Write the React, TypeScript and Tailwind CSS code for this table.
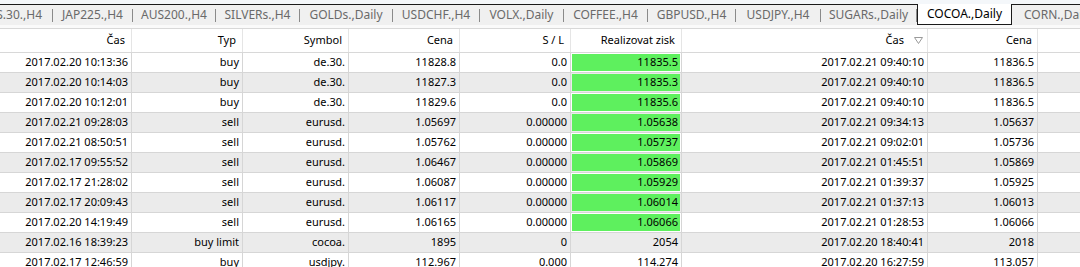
import React from 'react';

type Tab = { label: string; width: string };

const tabs: Tab[] = [
  { label: 'US.30.,H4', width: 'w-[52px]' },
  { label: 'JAP225.,H4', width: 'w-[79px]' },
  { label: 'AUS200.,H4', width: 'w-[82px]' },
  { label: 'SILVERs.,H4', width: 'w-[83px]' },
  { label: 'GOLDs.,Daily', width: 'w-[92px]' },
  { label: 'USDCHF.,H4', width: 'w-[86px]' },
  { label: 'VOLX.,Daily', width: 'w-[83px]' },
  { label: 'COFFEE.,H4', width: 'w-[83px]' },
  { label: 'GBPUSD.,H4', width: 'w-[87px]' },
  { label: 'USDJPY.,H4', width: 'w-[84px]' },
  { label: 'SUGARs.,Daily', width: 'w-[95px]' },
];

// column widths incl. the 1px right border
const cols = ['w-[132px]', 'w-[111px]', 'w-[106px]', 'w-[111px]', 'w-[111px]', 'w-[111px]', 'w-[246px]', 'w-[110px]'];

type Order = {
  time: string;
  type: string;
  symbol: string;
  price: string;
  sl: string;
  tp: string;
  closeTime: string;
  closePrice: string;
  hit: boolean;
};

const orders: Order[] = [
  { time: '2017.02.20 10:13:36', type: 'buy', symbol: 'de.30.', price: '11828.8', sl: '0.0', tp: '11835.5', closeTime: '2017.02.21 09:40:10', closePrice: '11836.5', hit: true },
  { time: '2017.02.20 10:14:03', type: 'buy', symbol: 'de.30.', price: '11827.3', sl: '0.0', tp: '11835.3', closeTime: '2017.02.21 09:40:10', closePrice: '11836.5', hit: true },
  { time: '2017.02.20 10:12:01', type: 'buy', symbol: 'de.30.', price: '11829.6', sl: '0.0', tp: '11835.6', closeTime: '2017.02.21 09:40:10', closePrice: '11836.5', hit: true },
  { time: '2017.02.21 09:28:03', type: 'sell', symbol: 'eurusd.', price: '1.05697', sl: '0.00000', tp: '1.05638', closeTime: '2017.02.21 09:34:13', closePrice: '1.05637', hit: true },
  { time: '2017.02.21 08:50:51', type: 'sell', symbol: 'eurusd.', price: '1.05762', sl: '0.00000', tp: '1.05737', closeTime: '2017.02.21 09:02:01', closePrice: '1.05736', hit: true },
  { time: '2017.02.17 09:55:52', type: 'sell', symbol: 'eurusd.', price: '1.06467', sl: '0.00000', tp: '1.05869', closeTime: '2017.02.21 01:45:51', closePrice: '1.05869', hit: true },
  { time: '2017.02.17 21:28:02', type: 'sell', symbol: 'eurusd.', price: '1.06087', sl: '0.00000', tp: '1.05929', closeTime: '2017.02.21 01:39:37', closePrice: '1.05925', hit: true },
  { time: '2017.02.17 20:09:43', type: 'sell', symbol: 'eurusd.', price: '1.06117', sl: '0.00000', tp: '1.06014', closeTime: '2017.02.21 01:37:13', closePrice: '1.06013', hit: true },
  { time: '2017.02.20 14:19:49', type: 'sell', symbol: 'eurusd.', price: '1.06165', sl: '0.00000', tp: '1.06066', closeTime: '2017.02.21 01:28:53', closePrice: '1.06066', hit: true },
  { time: '2017.02.16 18:39:23', type: 'buy limit', symbol: 'cocoa.', price: '1895', sl: '0', tp: '2054', closeTime: '2017.02.20 18:40:41', closePrice: '2018', hit: false },
  { time: '2017.02.17 12:46:59', type: 'buy', symbol: 'usdjpy.', price: '112.967', sl: '0.000', tp: '114.274', closeTime: '2017.02.20 16:27:59', closePrice: '113.057', hit: false },
];

const SortIcon = () => (
  <svg width="9" height="7" viewBox="0 0 9 7" className="ml-[10px] mr-[4px]">
    <path d="M0.5 0.5 H8.5 L4.5 6.5 Z" fill="none" stroke="#9a9a9a" strokeWidth="1" />
  </svg>
);

const App: React.FC = () => {
  const headers = ['Čas', 'Typ', 'Symbol', 'Cena', 'S / L', 'Realizovat zisk'];

  return (
    <div className="w-[1080px] h-[267px] overflow-hidden bg-white text-black" style={{ fontFamily: '"Noto Sans", "Open Sans", sans-serif' }}>
      {/* Tab strip */}
      <div className="h-[4px] bg-[#f4f7fa]" />
      <div className="flex h-[21px] bg-[#f0f0f0] border-t border-[#1a1a1a] text-[12px] whitespace-nowrap">
        {tabs.map((t, i) => (
          <React.Fragment key={t.label}>
            <div className={`${t.width} shrink-0 flex items-center overflow-hidden text-[#6a6a6a] ${i === 0 ? 'justify-end pr-[10px]' : 'justify-center'}`}>
              {t.label}
            </div>
            <div className="w-px shrink-0 self-center h-[13px] bg-[#8a8a8a]" />
          </React.Fragment>
        ))}
        <div className="w-[95px] shrink-0 -mt-px h-[21px] flex items-center justify-center bg-white border-x border-b border-[#1a1a1a]">
          COCOA.,Daily
        </div>
        <div className="shrink-0 flex items-center pl-[12px] text-[#6a6a6a]">CORN.,Daily</div>
      </div>
      <div className="h-[3px] bg-[#fafafa]" />

      {/* Table */}
      <div className="text-[11px]">
        <div className="flex h-[25px] border-y border-[#d8d8d8] bg-white">
          {headers.map((h, i) => (
            <div key={i} className={`${cols[i]} shrink-0 flex items-center justify-end pr-[6px] border-r border-[#e5e5e5]`}>
              {h}
            </div>
          ))}
          <div className={`${cols[6]} shrink-0 flex items-center justify-end border-r border-[#e5e5e5]`}>
            Čas
            <SortIcon />
          </div>
          <div className={`${cols[7]} shrink-0 flex items-center justify-end pr-[5px] border-r border-[#e5e5e5]`}>Cena</div>
          <div className="flex-1" />
        </div>

        {orders.map((o, r) => {
          const cells = [o.time, o.type, o.symbol, o.price, o.sl];
          return (
            <div key={r} className={`flex h-[20px] border-b border-[#d6d6d6] ${r % 2 === 1 ? 'bg-[#ebebeb]' : 'bg-white'}`}>
              {cells.map((c, i) => (
                <div key={i} className={`${cols[i]} shrink-0 flex items-center justify-end pr-[3px] border-r border-[#d6d6d6]`}>
                  {c}
                </div>
              ))}
              <div className={`${cols[5]} shrink-0 p-px border-r border-[#d6d6d6]`}>
                <div className={`h-full flex items-center justify-end pr-[2px] ${o.hit ? 'bg-[#5ef05e]' : ''}`}>{o.tp}</div>
              </div>
              <div className={`${cols[6]} shrink-0 flex items-center justify-end pr-[3px] border-r border-[#d6d6d6]`}>{o.closeTime}</div>
              <div className={`${cols[7]} shrink-0 flex items-center justify-end pr-[3px] border-r border-[#d6d6d6]`}>{o.closePrice}</div>
              <div className="flex-1" />
            </div>
          );
        })}
      </div>
    </div>
  );
};

export default App;
